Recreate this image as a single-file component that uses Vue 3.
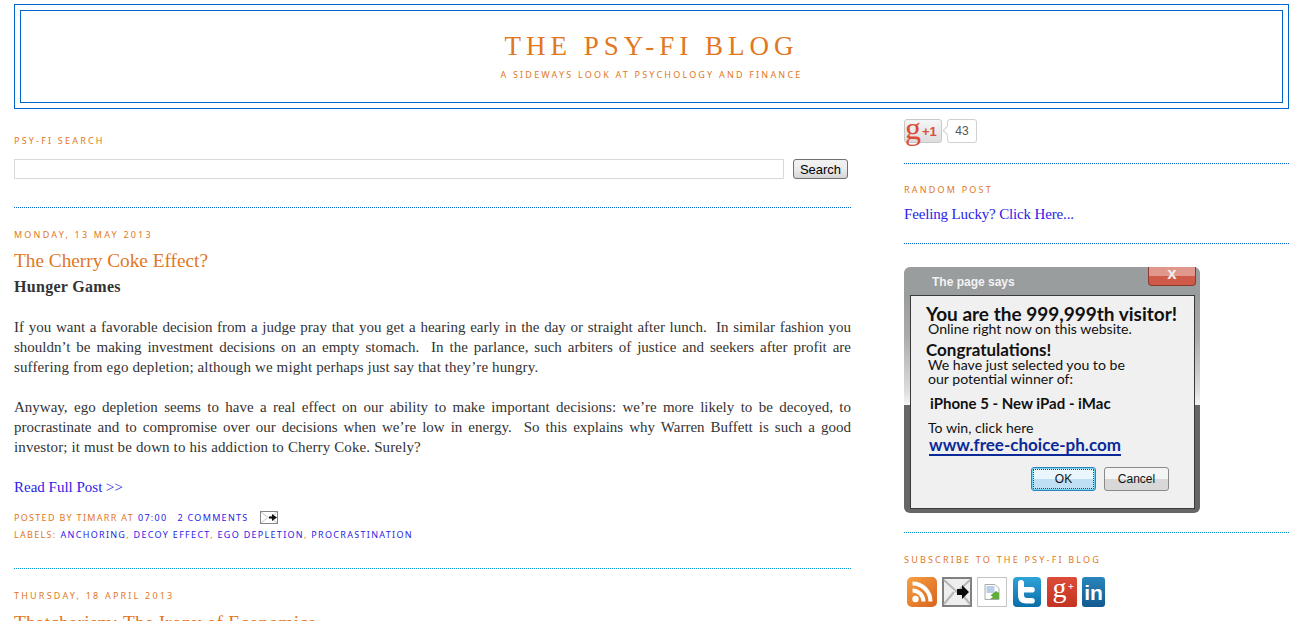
<script setup>
const paragraphs = [
  [
    'If you want a favorable decision from a judge pray that you get a hearing early in the day or straight after lunch.\u00a0 In similar fashion you',
    'shouldn’t be making investment decisions on an empty stomach.\u00a0 In the parlance, such arbiters of justice and seekers after profit are'
  ],
  [
    'Anyway, ego depletion seems to have a real effect on our ability to make important decisions: we’re more likely to be decoyed, to',
    'procrastinate and to compromise over our decisions when we’re low in energy.\u00a0 So this explains why Warren Buffett is such a good'
  ]
]
const lastLines = [
  'suffering from ego depletion; although we might perhaps just say that they’re hungry.',
  'investor; it must be down to his addiction to Cherry Coke. Surely?'
]
const labels = ['anchoring', 'decoy effect', 'ego depletion', 'procrastination']
</script>

<template>
  <div class="page">
    <header class="header">
      <div class="header-inner">
        <h1>The Psy-Fi Blog</h1>
        <p>A sideways look at psychology and finance</p>
      </div>
    </header>

    <div class="columns">
      <main class="main">
        <section class="search">
          <h2 class="label">Psy-Fi Search</h2>
          <div class="search-row">
            <input type="text" class="search-input" />
            <button class="search-btn">Search</button>
          </div>
        </section>

        <article class="post">
          <h2 class="label date">Monday, 13 May 2013</h2>
          <h3 class="post-title">The Cherry Coke Effect?</h3>
          <p class="sub">Hunger Games</p>

          <div v-for="(lines, i) in paragraphs" :key="i" class="para">
            <span v-for="line in lines" :key="line" class="line">{{ line }}</span>
            <span class="last">{{ lastLines[i] }}</span>
          </div>

          <a class="more">Read Full Post &gt;&gt;</a>

          <div class="meta">
            <span>Posted by Timarr at</span>
            <a>07:00</a>
            <a class="comments">2 comments</a>
            <svg class="mail" width="18" height="13" viewBox="0 0 18 13">
              <rect x=".5" y=".5" width="17" height="12" fill="#fff" stroke="#858585" />
              <path d="M1 1l8 6 8-6M1 12l6-5M17 12l-6-5" fill="none" stroke="#c4c4c4" />
              <path d="M9 5.500h3V3l5 3.500L12 10V7.500H9z" fill="#111" />
            </svg>
          </div>
          <div class="meta labels">
            <span>Labels:</span>
            <div class="label-list">
              <template v-for="(l, i) in labels" :key="l"><a>{{ l }}</a><span v-if="i < labels.length - 1" class="comma">, </span></template>
            </div>
          </div>
        </article>

        <article class="post next">
          <h2 class="label date">Thursday, 18 April 2013</h2>
          <h3 class="post-title">Thatcherism: The Irony of Economics</h3>
        </article>
      </main>

      <aside class="side">
        <div class="plus-row">
          <div class="plus-btn">
            <span class="g">g</span>
            <span class="one">+1</span>
          </div>
          <div class="count">43</div>
        </div>

        <section class="widget random">
          <h2 class="label">Random Post</h2>
          <a class="lucky">Feeling Lucky? Click Here...</a>
        </section>

        <section class="widget ad-wrap">
          <div class="dialog">
            <div class="dialog-bar">
              <span>The page says</span>
              <div class="close">x</div>
            </div>
            <div class="dialog-body">
              <p class="big">You are the 999,999th visitor!</p>
              <p class="txt">Online right now on this website.</p>
              <p class="congrats">Congratulations!</p>
              <p class="txt">We have just selected you to be<br />our potential winner of:</p>
              <p class="prizes">iPhone 5 - New iPad - iMac</p>
              <p class="txt win">To win, click here</p>
              <a class="url">www.free-choice-ph.com</a>
              <div class="dialog-actions">
                <button class="ok">OK</button>
                <button class="cancel">Cancel</button>
              </div>
            </div>
          </div>
        </section>

        <section class="widget subscribe">
          <h2 class="label">Subscribe to the Psy-Fi Blog</h2>
          <div class="icons">
            <svg width="30" height="30" viewBox="0 0 30 30">
              <defs>
                <linearGradient id="rss" x1="0" y1="0" x2="1" y2="1">
                  <stop offset="0" stop-color="#f7a043" />
                  <stop offset="1" stop-color="#d9641c" />
                </linearGradient>
              </defs>
              <rect width="30" height="30" rx="5" fill="url(#rss)" />
              <circle cx="8.500" cy="22" r="3.200" fill="#fff" />
              <path d="M5.500 13.500a11 11 0 0 1 11 11M5.500 6.500a18 18 0 0 1 18 18" fill="none" stroke="#fff" stroke-width="4" />
            </svg>
            <svg width="30" height="30" viewBox="0 0 30 30">
              <rect x="1" y="1" width="28" height="28" fill="#eee" stroke="#808080" stroke-width="2" />
              <path d="M2 3l13 12L28 3M2 27l10-12M28 27L18 15" fill="none" stroke="#b5b5b5" stroke-width="2" />
              <path d="M15 12h5V8l7 7-7 7v-4h-5z" fill="#0c0c0c" />
            </svg>
            <div class="broken">
              <svg width="16" height="16" viewBox="0 0 16 16">
                <path d="M1 .5h10l4 4v11H1z" fill="#fff" stroke="#aaa" />
                <rect x="2.500" y="2" width="8" height="7" fill="#b9cfe8" />
                <path d="M2 15L12 7l3 2v6z" fill="#5fae3c" />
                <path d="M2 15l4-4 3 2-3 2z" fill="#fff" />
              </svg>
            </div>
            <svg width="30" height="30" viewBox="0 0 30 30">
              <defs>
                <linearGradient id="tw" x1="0" y1="0" x2="0" y2="1">
                  <stop offset="0" stop-color="#2fa3d8" />
                  <stop offset="1" stop-color="#0b6ea8" />
                </linearGradient>
              </defs>
              <rect x="1" width="28" height="30" rx="4" fill="url(#tw)" />
              <path d="M6 6a3 3 0 0 1 6 0v4h8a2.800 2.800 0 0 1 0 5.600h-8v2.400c0 2 1 3 3 3h5a2.800 2.800 0 0 1 0 5.600h-6c-5 0-8-3-8-8z" fill="#fff" />
            </svg>
            <div class="gplus"><span>g</span><i>+</i></div>
            <div class="linkedin">in</div>
          </div>
        </section>
      </aside>
    </div>
  </div>
</template>

<style scoped>
.page {
  width: 1275px;
  height: 621px;
  overflow: hidden;
  padding: 4px 12px 0 14px;
  font-family: "Liberation Serif", serif;
  color: #333;
  background: #fff;
}

.header {
  border: 1px solid #0066cc;
  padding: 5px;
}

.header-inner {
  border: 1px solid #0066cc;
  height: 93px;
  text-align: center;
  box-sizing: border-box;
}

.header-inner h1 {
  margin: 0;
  padding-top: 20px;
  font-size: 27px;
  line-height: 30px;
  font-weight: 400;
  letter-spacing: 5px;
  text-transform: uppercase;
  color: #e1771e;
}

.header-inner p {
  margin: 8px 0 0;
  font-family: "Noto Sans", sans-serif;
  font-size: 9px;
  line-height: 12px;
  letter-spacing: 2.2px;
  text-transform: uppercase;
  color: #e1771e;
}

.columns {
  display: flex;
  gap: 53px;
}

.main {
  width: 837px;
  flex: none;
}

.side {
  width: 385px;
  flex: none;
}

.label {
  margin: 0;
  font-family: "Noto Sans", sans-serif;
  font-size: 9px;
  line-height: 12px;
  font-weight: 400;
  letter-spacing: 2.2px;
  text-transform: uppercase;
  color: #e1771e;
}

.search {
  padding-top: 26px;
  height: 72px;
  border-bottom: 1px dotted #0066cc;
}

.search-row {
  display: flex;
  justify-content: space-between;
  margin-top: 12px;
  padding-right: 3px;
}

.search-input {
  width: 770px;
  height: 20px;
  box-sizing: border-box;
  border: 1px solid #d9d9d9;
  padding: 0;
}

.search-btn {
  width: 55px;
  height: 20px;
  padding: 0;
  border: 1px solid #707070;
  border-radius: 3px;
  background: linear-gradient(#f2f2f2, #ebebeb 50%, #d5d5d5);
  font-family: "Liberation Sans", sans-serif;
  font-size: 13px;
  color: #000;
}

.post {
  padding-top: 21px;
  height: 339px;
  border-bottom: 1px dotted #0099cc;
}

.post-title {
  margin: 7px 0 0;
  font-size: 19.300px;
  line-height: 26px;
  font-weight: 400;
  color: #e1771e;
}

.sub {
  margin: 3px 0 20px;
  font-size: 16px;
  line-height: 20px;
  font-weight: 700;
  letter-spacing: .3px;
}

.para {
  margin-bottom: 20px;
  font-size: 15px;
  line-height: 20px;
}

.line {
  display: block;
  text-align: justify;
  text-align-last: justify;
}

.last {
  display: block;
  letter-spacing: .13px;
}

.more,
.lucky {
  display: block;
  font-size: 15px;
  line-height: 20px;
  color: #2b22e6;
}

.meta {
  margin-top: 13px;
  display: flex;
  align-items: center;
  gap: 4px;
  height: 14px;
  font-family: "Noto Sans", sans-serif;
  font-size: 9px;
  letter-spacing: 1.300px;
  text-transform: uppercase;
  color: #e1771e;
}

.meta a {
  color: #2b22e6;
}

.meta .comments {
  margin-left: 6px;
}

.mail {
  margin-left: 7px;
}

.labels {
  margin-top: 3px;
}

.comma {
  white-space: pre;
}

.next {
  border: 0;
}

.next .post-title {
  margin-top: 8px;
  letter-spacing: .22px;
}

.plus-row {
  display: flex;
  align-items: flex-start;
  padding-top: 10px;
  height: 54px;
  box-sizing: border-box;
}

.plus-btn {
  width: 38px;
  height: 24px;
  box-sizing: border-box;
  border: 1px solid #c8c8c8;
  border-radius: 3px;
  background: linear-gradient(#f6f6f6, #dcdcdc);
  display: flex;
  align-items: center;
}

.g {
  width: 16px;
  font-family: "Liberation Serif", serif;
  font-size: 32px;
  line-height: 22px;
  color: #dd4b39;
  margin-top: -6px;
}

.one {
  margin-left: 1px;
  font-family: "Liberation Sans", sans-serif;
  font-size: 13px;
  font-weight: 700;
  color: #d9503a;
}

.count {
  position: relative;
  margin-left: 5px;
  width: 30px;
  height: 24px;
  box-sizing: border-box;
  border: 1px solid #d0d0d0;
  border-radius: 3px;
  background: #fff;
  text-align: center;
  font-family: "Liberation Sans", sans-serif;
  font-size: 12px;
  line-height: 23px;
  color: #555;
}

.count::before {
  content: "";
  position: absolute;
  left: -4px;
  top: 7px;
  width: 6px;
  height: 6px;
  background: #fff;
  border-left: 1px solid #d0d0d0;
  border-bottom: 1px solid #d0d0d0;
  transform: rotate(45deg);
}

.widget {
  border-top: 1px dotted #0066cc;
}

.random {
  height: 80px;
  padding-top: 20px;
  box-sizing: border-box;
}

.lucky {
  margin-top: 8px;
  letter-spacing: -.15px;
}

.ad-wrap {
  height: 289px;
  padding-top: 23px;
  box-sizing: border-box;
}

.dialog {
  width: 296px;
  height: 246px;
  box-sizing: border-box;
  border-radius: 6px;
  background: linear-gradient(#9a9d9e 0 12%, #aaa 28%, #dcdcdc 50%, #f4f4f4 56%, #666 56.100%);
  padding: 0 5px 4px 6px;
  display: flex;
  flex-direction: column;
  position: relative;
}

.dialog-bar {
  height: 28px;
  flex: none;
  font-family: "Liberation Sans", sans-serif;
  font-size: 12px;
  font-weight: 700;
  line-height: 31px;
  color: #f2f2f2;
  padding-left: 22px;
}

.close {
  position: absolute;
  right: 4px;
  top: 0;
  width: 48px;
  height: 19px;
  box-sizing: border-box;
  border: 1px solid #8c3a30;
  border-top: 0;
  border-radius: 0 0 4px 4px;
  background: linear-gradient(#e0988c 50%, #cf5a48 50%);
  text-align: center;
  font-size: 17px;
  font-weight: 700;
  line-height: 14px;
  color: #eee;
}

.dialog-body {
  flex: 1;
  border: 1px solid #3a3a3a;
  background: #f0f0f0;
  padding: 9px 0 0 15px;
  font-family: Lato, sans-serif;
  color: #111;
  position: relative;
}

.dialog-body p {
  margin: 0;
}

.dialog-body .big {
  font-size: 19px;
  line-height: 18px;
  font-weight: 700;
  margin-bottom: -1px;
}

.txt {
  font-size: 14.100px;
  line-height: 14px;
  padding-left: 2px;
}

.dialog-body .congrats {
  font-size: 17px;
  line-height: 20px;
  font-weight: 700;
  margin: 4px 0 -2px;
}

.dialog-body .prizes {
  margin-top: 8px;
  padding-left: 4px;
  font-size: 15px;
  line-height: 18px;
  font-weight: 700;
}

.dialog-body .win {
  margin-top: 9px;
}

.url {
  display: inline-block;
  margin: 1px 0 0 3px;
  font-size: 17px;
  line-height: 18px;
  font-weight: 700;
  color: #0a2a9a;
  border-bottom: 2px solid #0a2a9a;
}

.dialog-actions {
  position: absolute;
  right: 25px;
  bottom: 17px;
  display: flex;
  gap: 8px;
}

.dialog-actions button {
  width: 65px;
  height: 24px;
  padding: 0;
  border-radius: 3px;
  font-family: "Liberation Sans", sans-serif;
  font-size: 12px;
  color: #111;
}

.ok {
  border: 1px solid #2f83b8;
  background: linear-gradient(#eaf6fd 50%, #bfe0f4 50%);
  outline: 1px dotted #444;
  outline-offset: -3px;
  box-shadow: inset 0 0 0 1px #6fd3f5;
}

.cancel {
  border: 1px solid #8a8a8a;
  background: linear-gradient(#f4f4f4 50%, #d8d8d8 50%);
}

.subscribe {
  border-color: #0099cc;
  padding-top: 21px;
}

.icons {
  display: flex;
  gap: 5px;
  margin-top: 11px;
  padding-left: 3px;
}

.broken {
  width: 30px;
  height: 30px;
  box-sizing: border-box;
  border: 1px solid #c4c4c4;
  display: flex;
  align-items: center;
  justify-content: center;
}

.gplus {
  width: 30px;
  height: 30px;
  background: linear-gradient(#dc4c38, #c23321);
  border-radius: 2px;
  color: #fff;
  font-size: 28px;
  line-height: 22px;
  text-align: center;
  position: relative;
}

.gplus span {
  margin-left: -5px;
}

.gplus i {
  position: absolute;
  right: 3px;
  top: 2px;
  font-style: normal;
  font-size: 11px;
  line-height: 14px;
  font-weight: 700;
}

.linkedin {
  width: 23px;
  height: 30px;
  border-radius: 3px;
  background: linear-gradient(#2a85bd, #115a90);
  color: #fff;
  text-align: center;
  font-family: "Liberation Sans", sans-serif;
  font-size: 21px;
  font-weight: 700;
  line-height: 32px;
}
</style>
